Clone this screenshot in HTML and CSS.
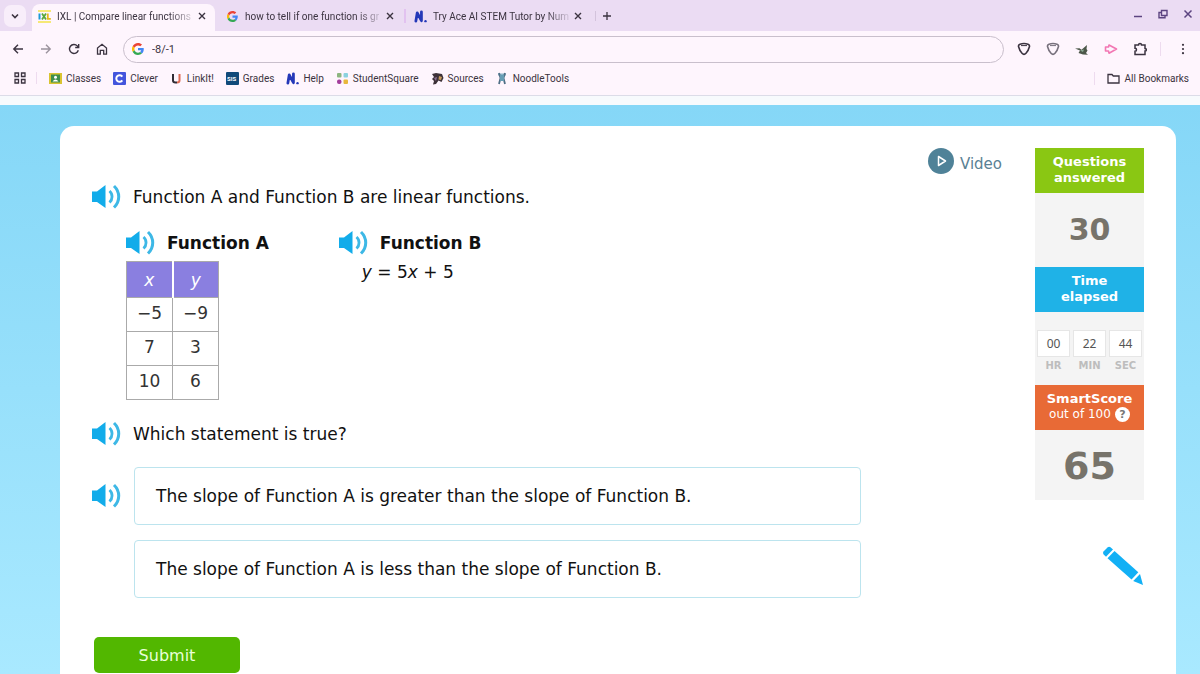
FILE: index.html
```html
<!DOCTYPE html>
<html lang="en">
<head>
    <meta charset="UTF-8">
    <meta name="viewport" content="width=device-width, initial-scale=1.0">
    <title>IXL | Compare linear functions</title>
    <link rel="stylesheet" href="styles.css">
</head>
<body>
    <!-- shared icons -->
    <svg class="sprite" aria-hidden="true">
        <symbol id="google" viewBox="0 0 48 48">
            <path fill="#EA4335" d="M24 9.5c3.5 0 6.700 1.200 9.200 3.600l6.900-6.900C35.900 2.400 30.500 0 24 0 14.600 0 6.500 5.400 2.600 13.200l8 6.200C12.400 13.700 17.700 9.500 24 9.500z"/>
            <path fill="#4285F4" d="M47 24.500c0-1.600-.2-3.100-.4-4.500H24v9h12.900c-.6 3-2.200 5.500-4.700 7.200l7.700 6C44.400 38 47 31.800 47 24.500z"/>
            <path fill="#FBBC05" d="M10.500 28.600a14.500 14.500 0 0 1 0-9.200l-8-6.200a24 24 0 0 0 0 21.600z"/>
            <path fill="#34A853" d="M24 48c6.500 0 11.900-2.100 15.900-5.800l-7.700-6c-2.200 1.500-4.900 2.300-8.200 2.300-6.300 0-11.600-4.200-13.500-9.900l-8 6.200C6.500 42.600 14.600 48 24 48z"/>
        </symbol>
        <symbol id="cross" viewBox="0 0 10 10">
            <path d="M2 2l6 6M8 2L2 8" fill="none" stroke="currentColor" stroke-width="1.400"/>
        </symbol>
        <symbol id="numerade" viewBox="0 0 14 14">
            <path d="M2 12L3.500 3l4.500 8.500V2" fill="none" stroke="#2438b8" stroke-width="3" stroke-linecap="round" stroke-linejoin="round"/>
            <circle cx="12.400" cy="12" r="1.300" fill="#2438b8"/>
        </symbol>
        <symbol id="speaker" viewBox="1 0 30 26">
            <path d="M1 7.500h5L14.500 1v23L6 18H1z" fill="#12acea"/>
            <path d="M18.500 7c3.400 3 3.400 8.500 0 11.500" fill="none" stroke="#3db8e6" stroke-width="2.800"/>
            <path d="M23 2c6.300 6 6.300 15.500 0 21.500" fill="none" stroke="#3db8e6" stroke-width="3"/>
        </symbol>
        <symbol id="shield" viewBox="0 0 14 14">
            <path d="M3 2.200Q7 .8 11 2.200q2 .8 1.400 2.600-1 4-3.400 6.500-2 2-4 0Q2.600 8.800 1.600 4.800 1 3 3 2.200z" fill="none" stroke="currentColor" stroke-width="1.600"/>
            <path d="M4 3.600h6" fill="none" stroke="currentColor" stroke-width="1"/>
        </symbol>
    </svg>

    <header class="browser">
        <div class="tab-strip">
            <button class="tab-search" aria-label="Search tabs">
                <svg width="10" height="10" viewBox="0 0 10 10"><path d="M2 3.500l3 3 3-3" fill="none" stroke="#3b3340" stroke-width="1.600"/></svg>
            </button>
            <div class="tab active">
                <svg class="favicon" viewBox="0 0 13 13">
                    <path d="M0 1h13M0 12h13" stroke="#f3e34a" stroke-width="1.400"/>
                    <path d="M1.500 3.500v6" stroke="#1c9ad6" stroke-width="2"/>
                    <path d="M4 3.500l4 6M8 3.500l-4 6" stroke="#5aa83c" stroke-width="1.800"/>
                    <path d="M9.800 3.500v5.300h3" fill="none" stroke="#e5b91c" stroke-width="1.800"/>
                </svg>
                <span class="tab-title">IXL | Compare linear functions</span>
                <button class="close" aria-label="Close tab"><svg width="10" height="10"><use href="#cross"/></svg></button>
            </div>
            <div class="tab">
                <svg class="favicon google"><use href="#google"/></svg>
                <span class="tab-title">how to tell if one function is gr</span>
                <button class="close" aria-label="Close tab"><svg width="10" height="10"><use href="#cross"/></svg></button>
            </div>
            <div class="tab divided">
                <svg class="favicon"><use href="#numerade"/></svg>
                <span class="tab-title">Try Ace AI STEM Tutor by Num</span>
                <button class="close" aria-label="Close tab"><svg width="10" height="10"><use href="#cross"/></svg></button>
            </div>
            <button class="new-tab" aria-label="New tab">
                <svg width="10" height="10" viewBox="0 0 10 10"><path d="M5 1v8M1 5h8" stroke="#3b3340" stroke-width="1.300"/></svg>
            </button>
            <div class="window-controls">
                <button aria-label="Minimize"><svg width="10" height="10" viewBox="0 0 10 10"><path d="M1 7.500h8" stroke="currentColor" stroke-width="1.500"/></svg></button>
                <button aria-label="Restore"><svg width="10" height="10" viewBox="0 0 10 10"><path d="M3.500 1.500H9v5H3.500zM3 3.500H1v5.200h6V7" fill="none" stroke="currentColor" stroke-width="1.400"/></svg></button>
                <button aria-label="Close window"><svg width="10" height="10" viewBox="0 0 10 10"><path d="M1.500 1.500l7 7M8.500 1.500l-7 7" stroke="currentColor" stroke-width="1.500"/></svg></button>
            </div>
        </div>

        <div class="toolbar">
            <button aria-label="Back"><svg width="12" height="12" viewBox="0 0 12 12"><path d="M11 6H2M6 1.800L1.800 6 6 10.200" fill="none" stroke="currentColor" stroke-width="1.400"/></svg></button>
            <button class="disabled" aria-label="Forward"><svg width="12" height="12" viewBox="0 0 12 12"><path d="M1 6h9M6 1.800L10.200 6 6 10.200" fill="none" stroke="currentColor" stroke-width="1.400"/></svg></button>
            <button aria-label="Reload"><svg width="12" height="12" viewBox="0 0 12 12"><path d="M10.300 7.200A4.500 4.500 0 1 1 9.300 2.900L10.500 4.200M10.700 1v3.500H7.200" fill="none" stroke="currentColor" stroke-width="1.400"/></svg></button>
            <button aria-label="Home"><svg width="12" height="12" viewBox="0 0 12 12"><path d="M1.500 11.200V5L6 1.300 10.500 5v6.200H7.700V7.300H4.300v3.900z" fill="none" stroke="currentColor" stroke-width="1.300"/></svg></button>
            <label class="omnibox">
                <svg width="12" height="12"><use href="#google"/></svg>
                <input type="text" value="-8/-1" aria-label="Address and search bar">
            </label>
            <div class="extensions">
                <button aria-label="Shield"><svg width="14" height="14"><use href="#shield"/></svg></button>
                <button class="muted" aria-label="Shield"><svg width="14" height="14"><use href="#shield"/></svg></button>
                <button aria-label="Hummingbird">
                    <svg width="14" height="14" viewBox="0 0 14 14"><path d="M0 6.500l4.500-.3 2 1.600L12 3l-.5 4 1 1.500L11 11l2 1.800-5-.3-4.500-1.500L5 8.500z" fill="#4c5749"/><path d="M5 8.500l4-1-1 2.500z" fill="#8aa892"/></svg>
                </button>
                <button aria-label="Pink fish">
                    <svg width="14" height="14" viewBox="0 0 14 14"><path d="M5 3L12.500 7 5 11.200 4.500 9H1.500V5h3z" fill="none" stroke="#f277b3" stroke-width="1.600" stroke-linejoin="round"/></svg>
                </button>
                <button aria-label="Extensions">
                    <svg width="14" height="14" viewBox="0 0 14 14"><path d="M2 3h3.500a1.500 1.500 0 0 1 3 0H12v3.500a1.300 1.300 0 0 1 0 2.600V12.500H2V9.300a1.500 1.500 0 0 0 0-3z" fill="none" stroke="#3b3340" stroke-width="1.500"/></svg>
                </button>
            </div>
            <button class="menu" aria-label="Menu"><svg width="12" height="12" viewBox="0 0 12 12"><g fill="currentColor"><circle cx="6" cy="1.800" r="1.100"/><circle cx="6" cy="6" r="1.100"/><circle cx="6" cy="10.200" r="1.100"/></g></svg></button>
        </div>

        <nav class="bookmarks">
            <button class="apps" aria-label="Tab groups"><svg width="12" height="12" viewBox="0 0 12 12"><path d="M1 1h3.500v3.500H1zM7.500 1H11v3.500H7.500zM1 7.500h3.500V11H1zM7.500 7.500H11V11H7.500z" fill="none" stroke="currentColor" stroke-width="1.300"/></svg></button>
            <a href="#">
                <svg viewBox="0 0 13 13"><path d="M0 1h13v11H0z" fill="#d9c431"/><path d="M2 2.500h9v8H2z" fill="#3f8f4c"/><circle cx="6.500" cy="5.200" r="1.500" fill="#fff"/><path d="M3.500 9.500q3-4 6 0z" fill="#fff"/></svg>
                Classes
            </a>
            <a href="#">
                <svg viewBox="0 0 13 13"><rect width="13" height="13" rx="1" fill="#4355dd"/><path d="M9.300 4.600A3.300 3.300 0 1 0 9.300 8.400" fill="none" stroke="#fff" stroke-width="2"/></svg>
                Clever
            </a>
            <a href="#">
                <svg viewBox="0 0 13 13"><path d="M3 2v6.500q0 2 2.500 2H7" fill="none" stroke="#302c35" stroke-width="2"/><path d="M9.500 2v6.500q0 2-2.500 2" fill="none" stroke="#dc6b55" stroke-width="2"/></svg>
                LinkIt!
            </a>
            <a href="#">
                <svg viewBox="0 0 13 13"><rect width="13" height="13" rx="1" fill="#114a7a"/><text class="sis" x="1" y="9">SIS</text></svg>
                Grades
            </a>
            <a href="#">
                <svg viewBox="0 0 14 14"><use href="#numerade"/></svg>
                Help
            </a>
            <a href="#">
                <svg viewBox="0 0 13 13"><rect x="1" y="1" width="4.500" height="4.500" rx="1" fill="#8db580"/><rect x="7.500" y="1" width="4.500" height="4.500" rx="1" fill="#8bd2df"/><rect x="1" y="7.500" width="4.500" height="4.500" rx="2" fill="#a33d9c"/><rect x="7.500" y="7.500" width="4.500" height="4.500" rx="1" fill="#e8b73c"/></svg>
                StudentSquare
            </a>
            <a href="#">
                <svg viewBox="0 0 13 13"><path d="M1 2l4-1 6 1 1.500 4-2 4-3-1.500L5 12l-3 .5L3 9 1 7l2-2z" fill="#3d3138"/><path d="M8 4l3 1-1 3-2.500-.5z" fill="#c69a5b"/><path d="M3 6l3-1-1 4z" fill="#8b6f95"/></svg>
                Sources
            </a>
            <a href="#">
                <svg viewBox="0 0 13 13"><path d="M2 2.500h8" stroke="#8db6ca" stroke-width="2"/><path d="M3 1l1.500 5L3 12M9 1L7.500 6 9 12" fill="none" stroke="#506f86" stroke-width="1.800"/><path d="M4 3h4v6H4z" fill="#679db4"/></svg>
                NoodleTools
            </a>
            <a class="all" href="#">
                <svg viewBox="0 0 13 13"><path d="M1 2.500h4l1.300 1.500H12v7H1z" fill="none" stroke="#3b3340" stroke-width="1.300"/></svg>
                All Bookmarks
            </a>
        </nav>
    </header>

    <div class="page">
        <div class="card">
            <main class="question">
                <div class="line intro">
                    <button class="speak" aria-label="Read aloud"><svg width="30" height="26"><use href="#speaker"/></svg></button>
                    <p>Function A and Function B are linear functions.</p>
                </div>

                <div class="functions">
                    <section>
                        <div class="line">
                            <button class="speak" aria-label="Read aloud"><svg width="30" height="26"><use href="#speaker"/></svg></button>
                            <h2>Function A</h2>
                        </div>
                        <table>
                            <thead>
                                <tr><th>x</th><th>y</th></tr>
                            </thead>
                            <tbody>
                                <tr><td>−5</td><td>−9</td></tr>
                                <tr><td>7</td><td>3</td></tr>
                                <tr><td>10</td><td>6</td></tr>
                            </tbody>
                        </table>
                    </section>
                    <section>
                        <div class="line">
                            <button class="speak" aria-label="Read aloud"><svg width="30" height="26"><use href="#speaker"/></svg></button>
                            <h2>Function B</h2>
                        </div>
                        <p class="equation"><i>y</i> = 5<i>x</i> + 5</p>
                    </section>
                </div>

                <div class="line prompt">
                    <button class="speak" aria-label="Read aloud"><svg width="30" height="26"><use href="#speaker"/></svg></button>
                    <p>Which statement is true?</p>
                </div>

                <div class="answers">
                    <button class="speak" aria-label="Read aloud"><svg width="30" height="26"><use href="#speaker"/></svg></button>
                    <button class="answer">The slope of Function A is greater than the slope of Function B.</button>
                    <button class="answer">The slope of Function A is less than the slope of Function B.</button>
                </div>

                <button class="submit">Submit</button>
            </main>

            <a class="video" href="#">
                <svg width="26" height="26" viewBox="0 0 26 26"><circle cx="13" cy="13" r="13" fill="#4f8298"/><path d="M10.500 8.500L17.500 13l-7 4.500z" fill="none" stroke="#fff" stroke-width="1.500" stroke-linejoin="round"/></svg>
                <span>Video</span>
            </a>

            <aside class="stats">
                <h3 class="green">Questions answered</h3>
                <div class="count">30</div>
                <h3 class="blue">Time elapsed</h3>
                <div class="clock">
                    <div><b>00</b><span>HR</span></div>
                    <div><b>22</b><span>MIN</span></div>
                    <div><b>44</b><span>SEC</span></div>
                </div>
                <h3 class="orange">
                    SmartScore
                    <span>out of 100 <button class="help" aria-label="What is SmartScore?">?</button></span>
                </h3>
                <div class="score">65</div>
                <button class="pencil" aria-label="Scratchpad">
                    <svg width="42" height="40" viewBox="0 0 42 40">
                        <path d="M8.500 1.200q-1.500-1.200-3 .2L1.500 5.600q-1.200 1.500.2 3L4 10.800l7-7.200z" fill="#12b0f5"/>
                        <path d="M12.500 5L5.500 12.200l24 21.200 6.800-7.200z" fill="#12b0f5"/>
                        <path d="M38 28l-6.800 7L41 39z" fill="#12b0f5"/>
                    </svg>
                </button>
            </aside>
        </div>
    </div>
</body>
</html>
```
FILE: styles.css
```css
* {
    box-sizing: border-box;
}

body {
    margin: 0;
    height: 100vh;
    display: flex;
    flex-direction: column;
    overflow: hidden;
    font-family: "DejaVu Sans", Verdana, sans-serif;
    font-size: 17px;
    color: #111;
}

button {
    font: inherit;
    color: inherit;
    background: none;
    border: none;
    padding: 0;
    cursor: pointer;
}

svg {
    display: block;
    flex-shrink: 0;
}

p, h2, h3 {
    margin: 0;
}

.sprite {
    position: absolute;
    width: 0;
    height: 0;
}

/* browser window */
.browser {
    font-family: Roboto, sans-serif;
    font-size: 10px;
    color: #3b3340;
    background: #fef5fd;
    border-bottom: 1px solid #dcdce8;
}

.tab-strip {
    display: flex;
    align-items: center;
    height: 31px;
    padding: 0 7px 0 4px;
    background: #ebdcf3;
}

.tab-search {
    display: flex;
    align-items: center;
    justify-content: center;
    width: 22px;
    height: 22px;
    margin-right: 6px;
    border-radius: 7px;
    background: #f8eefa;
}

.tab {
    display: flex;
    align-items: center;
    align-self: flex-end;
    width: 188px;
    height: 27px;
    padding: 0 8px 3px 12px;
}

.tab.active {
    width: 183px;
    padding-left: 6px;
    background: #fef5fd;
    border-radius: 8px 8px 0 0;
}

.favicon {
    width: 13px;
    height: 13px;
    margin-right: 6px;
}

.favicon.google {
    width: 11px;
    height: 11px;
    margin-right: 7px;
}

.tab-title {
    flex: 1;
    white-space: nowrap;
    mask-image: linear-gradient(to right, #000 80%, transparent);
}

.tab.divided {
    position: relative;
    padding-left: 11px;
}

.tab.divided::before {
    content: "";
    position: absolute;
    left: 1px;
    top: 5px;
    width: 2px;
    height: 14px;
    background: #e2c2f0;
}

.new-tab {
    margin-left: 4px;
    padding-left: 6px;
    border-left: 1px solid #d3c3dc;
}

.window-controls {
    display: flex;
    gap: 15px;
    margin-left: auto;
    padding-bottom: 4px;
    color: #5c4480;
}

.toolbar {
    display: flex;
    align-items: center;
    gap: 16px;
    height: 36px;
    padding: 0 12px;
}

.disabled {
    opacity: 0.5;
}

.omnibox {
    display: flex;
    flex: 1;
    align-items: center;
    gap: 8px;
    height: 27px;
    margin-left: -1px;
    padding: 0 8px;
    border: 1px solid #c9bfcc;
    border-radius: 14px;
}

.omnibox input {
    flex: 1;
    padding: 0;
    border: none;
    outline: none;
    background: none;
    font: 11px Roboto, sans-serif;
    color: #3b3340;
}

.extensions {
    display: flex;
    gap: 15px;
    margin-left: -3px;
    padding-right: 13px;
    border-right: 1px solid #eedbef;
}

.muted {
    color: #77707c;
}

.menu {
    margin-right: -1px;
}

.bookmarks {
    display: flex;
    align-items: center;
    gap: 12px;
    height: 28px;
    padding: 0 11px 6px 14px;
}

.bookmarks a {
    display: flex;
    align-items: center;
    gap: 4px;
    color: inherit;
    text-decoration: none;
}

.bookmarks a svg {
    width: 13px;
    height: 13px;
}

.apps {
    padding-right: 10px;
    border-right: 1px solid #eedbef;
}

.bookmarks .all {
    gap: 5px;
    margin-left: auto;
    padding-left: 12px;
    border-left: 1px solid #eedbef;
}

.sis {
    font: bold 6px Roboto, sans-serif;
    fill: #fff;
}

/* practice page */
.page {
    flex: 1;
    display: flex;
    min-height: 0;
    padding: 21px 24px 0 60px;
    border-top: 9px solid #f7fafd;
    background: linear-gradient(#85d7f7, #a9e9ff);
}

.card {
    flex: 1;
    display: flex;
    align-items: flex-start;
    padding: 22px 32px 0;
    background: #fff;
    border-radius: 14px 14px 0 0;
}

.question {
    flex: 1;
}

.line {
    display: flex;
    align-items: center;
    gap: 11px;
    height: 26px;
}

.intro {
    margin-top: 36px;
}

.functions {
    display: flex;
    gap: 70px;
    margin: 20px 0 0 34px;
}

h2 {
    font-size: 17px;
}

table {
    margin-top: 5px;
    border-collapse: collapse;
    text-align: center;
    color: #333;
}

th, td {
    width: 46px;
    height: 34px;
    padding: 0;
    border: 1px solid #aaa;
}

td {
    padding-bottom: 3px;
}

th {
    height: 36px;
    background: #8a7fe0;
    color: #fff;
    font-weight: normal;
    font-style: italic;
}

th + th {
    border-left: 2px solid #fff;
}

.equation {
    margin: 6px 0 0 23px;
}

.prompt {
    margin-top: 21px;
}

.answers {
    display: grid;
    grid-template-columns: 30px minmax(0, 727px);
    align-items: center;
    gap: 15px 12px;
    margin-top: 20px;
}

.answer {
    grid-column: 2;
    height: 58px;
    padding: 0 21px;
    border: 1px solid #bce4ee;
    border-radius: 4px;
    text-align: left;
}

.submit {
    width: 146px;
    height: 36px;
    margin: 39px 0 0 2px;
    border-radius: 5px;
    background: #52b700;
    color: #e9ffd9;
    font-size: 16px;
}

.video {
    display: flex;
    gap: 6px;
    margin-right: 33px;
    color: #5a8194;
    font-size: 15px;
    text-decoration: none;
}

.video span {
    padding-top: 7px;
}

.stats {
    width: 109px;
    background: linear-gradient(#f4f4f4, #f4f4f4) no-repeat 0 0 / 100% 352px;
    text-align: center;
    color: #77736a;
}

h3 {
    height: 45px;
    padding: 6px 12px;
    color: #fff;
    font-size: 13px;
    line-height: 16px;
}

.green {
    background: #8ac713;
}

.blue {
    background: #1fb2e7;
}

.orange {
    background: #e86a36;
}

.count {
    font-size: 30px;
    font-weight: bold;
    line-height: 74px;
}

.clock {
    display: grid;
    grid-template-columns: repeat(3, 1fr);
    gap: 3px;
    height: 73px;
    padding: 18px 2px 0;
}

.clock b {
    display: block;
    border: 1px solid #e6e6e6;
    background: #fff;
    color: #555;
    font: 12px/25px "Noto Sans", sans-serif;
}

.clock span {
    display: block;
    color: #bdbdbd;
    font-size: 10px;
    font-weight: bold;
    line-height: 18px;
}

.orange {
    padding: 6px 0;
}

.orange span {
    display: flex;
    align-items: center;
    justify-content: center;
    gap: 4px;
    height: 14px;
    font-size: 12px;
    font-weight: normal;
}

.help {
    width: 15px;
    height: 15px;
    border-radius: 50%;
    background: #fff;
    color: #777;
    font-size: 11px;
    font-weight: bold;
    line-height: 15px;
}

.score {
    height: 70px;
    font-size: 38px;
    font-weight: bold;
    line-height: 72px;
}

.pencil {
    display: block;
    margin: 46px 0 0 auto;
}
```
